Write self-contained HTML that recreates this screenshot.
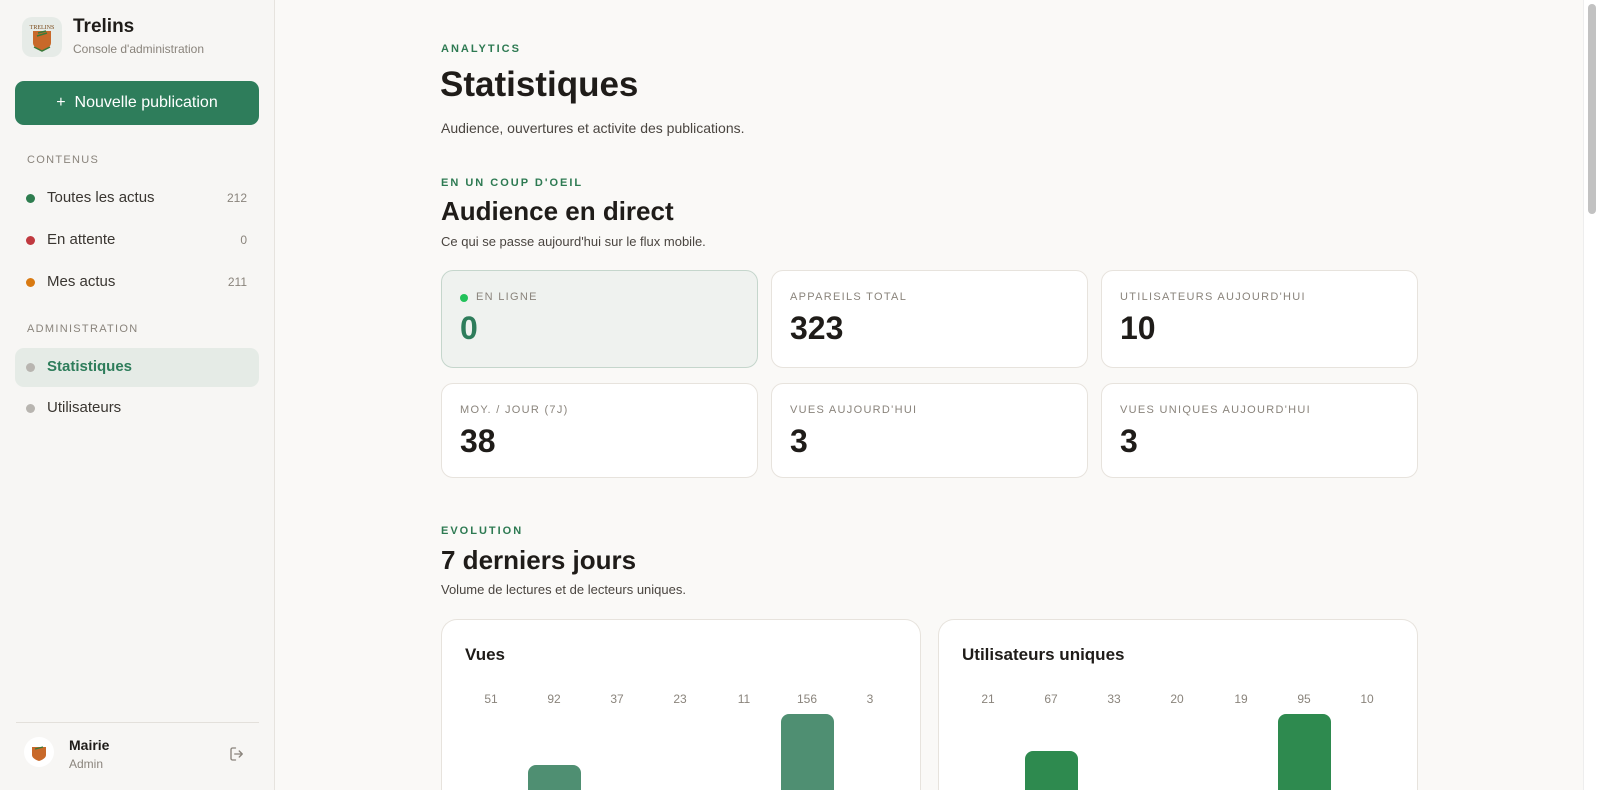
<!DOCTYPE html>
<html><head><meta charset="utf-8"><style>
*{margin:0;padding:0;box-sizing:border-box}
html,body{width:1600px;height:790px;overflow:hidden}
body{background:#faf9f7;font-family:"Liberation Sans",sans-serif;color:#1f1c19}
#w{position:relative;width:1600px;height:790px;overflow:hidden}
.a{position:absolute;white-space:nowrap}
.side{position:absolute;left:0;top:0;width:275px;height:790px;background:#f7f6f4;border-right:1px solid #e6e3de}
.lab{font-size:11px;letter-spacing:1.3px;color:#8a847c}
.dot{position:absolute;width:9px;height:9px;border-radius:50%}
.it{font-size:15px;color:#3a3631}
.cnt{font-size:12px;color:#8a847c}
.card{position:absolute;width:317px;background:#fff;border:1px solid #e7e3dd;border-radius:12px}
.card .l{position:absolute;left:18px;top:20px;font-size:11px;letter-spacing:1.3px;color:#8a847c}
.card .v{position:absolute;left:18px;top:39px;font-size:32px;font-weight:bold;color:#1f1c19}
.kick{font-size:11px;font-weight:bold;letter-spacing:2px;color:#2d7a52}
.h2{font-size:26px;font-weight:bold}
.desc{font-size:13px;color:#4a4540}
.cc{position:absolute;top:619px;width:480px;height:171px;background:#fff;border:1px solid #e7e3dd;border-bottom:none;border-radius:16px 16px 0 0;overflow:hidden}
.num{position:absolute;top:72px;width:40px;margin-left:-20px;text-align:center;font-size:12px;color:#8a847c}
.bar{position:absolute;width:53px;margin-left:-26px;height:200px;border-radius:8px}
</style></head><body><div id="w">
<div class="side">
<div class="a" style="left:22px;top:17px;width:40px;height:40px;border-radius:10px;background:#e6ebe7">
<svg width="40" height="40" viewBox="0 0 40 40"><text x="20" y="12" font-size="6" text-anchor="middle" fill="#7a4a1a" font-family="Liberation Serif">TRELINS</text><path d="M11 14h18v12c0 4-5 6-9 8-4-2-9-4-9-8z" fill="#c8692a"/><path d="M16 16l8-2M15 19l10-3" stroke="#3a7a3a" stroke-width="1.5"/><path d="M12 30l8 4 8-4" stroke="#3a7a3a" stroke-width="1.5" fill="none"/></svg></div>
<div class="a" style="left:73px;top:16px;font-size:19px;font-weight:bold">Trelins</div>
<div class="a" style="left:73px;top:42px;font-size:12px;color:#8a847c">Console d'administration</div>
<div class="a" style="left:15px;top:81px;width:244px;height:44px;background:#2e7d5b;border-radius:9px;color:#fff;font-size:16px;text-align:center;line-height:44px">+&nbsp;&nbsp;Nouvelle publication</div>
<div class="a lab" style="left:27px;top:154px">CONTENUS</div>
<div class="dot" style="left:26px;top:194px;background:#2e7d4f"></div><div class="a it" style="left:47px;top:189px">Toutes les actus</div><div class="a cnt" style="right:27px;top:191px">212</div>
<div class="dot" style="left:26px;top:236px;background:#c0393f"></div><div class="a it" style="left:47px;top:231px">En attente</div><div class="a cnt" style="right:27px;top:233px">0</div>
<div class="dot" style="left:26px;top:278px;background:#d97a12"></div><div class="a it" style="left:47px;top:273px">Mes actus</div><div class="a cnt" style="right:27px;top:275px">211</div>
<div class="a lab" style="left:27px;top:323px">ADMINISTRATION</div>
<div class="a" style="left:15px;top:348px;width:244px;height:39px;background:#e5ebe6;border-radius:9px"></div>
<div class="dot" style="left:26px;top:363px;background:#b8b5b0"></div><div class="a it" style="left:47px;top:358px;color:#2e7d5b;font-weight:bold">Statistiques</div>
<div class="dot" style="left:26px;top:404px;background:#b8b5b0"></div><div class="a it" style="left:47px;top:399px">Utilisateurs</div>
<div class="a" style="left:16px;top:722px;width:243px;height:1px;background:#e3e0db"></div>
<div class="a" style="left:24px;top:737px;width:30px;height:30px;border-radius:50%;background:#fff"><svg width="30" height="30" viewBox="0 0 30 30"><path d="M8 10h14v8c0 3-4 5-7 6-3-1-7-3-7-6z" fill="#c8692a"/><path d="M11 12l8-2" stroke="#3a7a3a" stroke-width="1.3"/></svg></div>
<div class="a" style="left:69px;top:737px;font-size:14px;font-weight:bold">Mairie</div>
<div class="a" style="left:69px;top:757px;font-size:12px;color:#8a847c">Admin</div>
<svg class="a" style="left:228px;top:745px" width="18" height="18" viewBox="0 0 24 24" fill="none" stroke="#8a847c" stroke-width="1.8" stroke-linecap="round" stroke-linejoin="round"><path d="M10 4H6a2 2 0 0 0-2 2v12a2 2 0 0 0 2 2h4"/><path d="M15 8l4 4-4 4M19 12H9"/></svg>
</div>

<div class="a kick" style="left:441px;top:43px">ANALYTICS</div>
<div class="a" style="left:440px;top:65px;font-size:35px;font-weight:bold">Statistiques</div>
<div class="a" style="left:441px;top:120px;font-size:14px;color:#4a4540">Audience, ouvertures et activite des publications.</div>
<div class="a kick" style="left:441px;top:177px">EN UN COUP D'OEIL</div>
<div class="a h2" style="left:441px;top:196px">Audience en direct</div>
<div class="a desc" style="left:441px;top:234px">Ce qui se passe aujourd'hui sur le flux mobile.</div>

<div class="card" style="left:441px;top:270px;height:98px;background:#eff2ef;border-color:#c5d6cc"><div class="dot" style="left:18px;top:23px;width:8px;height:8px;background:#22c25a"></div><div class="l" style="left:34px">EN LIGNE</div><div class="v" style="color:#2e7d5b">0</div></div>
<div class="card" style="left:771px;top:270px;height:98px"><div class="l">APPAREILS TOTAL</div><div class="v">323</div></div>
<div class="card" style="left:1101px;top:270px;height:98px"><div class="l">UTILISATEURS AUJOURD'HUI</div><div class="v">10</div></div>
<div class="card" style="left:441px;top:383px;height:95px"><div class="l">MOY. / JOUR (7J)</div><div class="v">38</div></div>
<div class="card" style="left:771px;top:383px;height:95px"><div class="l">VUES AUJOURD'HUI</div><div class="v">3</div></div>
<div class="card" style="left:1101px;top:383px;height:95px"><div class="l">VUES UNIQUES AUJOURD'HUI</div><div class="v">3</div></div>

<div class="a kick" style="left:441px;top:525px">EVOLUTION</div>
<div class="a h2" style="left:441px;top:545px">7 derniers jours</div>
<div class="a desc" style="left:441px;top:582px">Volume de lectures et de lecteurs uniques.</div>

<div class="cc" style="left:441px">
<div class="a" style="left:23px;top:25px;font-size:17px;font-weight:bold">Vues</div>
<div class="num" style="left:49px">51</div><div class="num" style="left:112px">92</div><div class="num" style="left:175px">37</div><div class="num" style="left:238px">23</div><div class="num" style="left:302px">11</div><div class="num" style="left:365px">156</div><div class="num" style="left:428px">3</div>
<div class="bar" style="left:112px;top:145px;height:30px;border-radius:8px 8px 0 0;background:#4f8f72"></div>
<div class="bar" style="left:365px;top:94px;height:80px;border-radius:8px 8px 0 0;background:#4f8f72"></div>
</div>
<div class="cc" style="left:938px">
<div class="a" style="left:23px;top:25px;font-size:17px;font-weight:bold">Utilisateurs uniques</div>
<div class="num" style="left:49px">21</div><div class="num" style="left:112px">67</div><div class="num" style="left:175px">33</div><div class="num" style="left:238px">20</div><div class="num" style="left:302px">19</div><div class="num" style="left:365px">95</div><div class="num" style="left:428px">10</div>
<div class="bar" style="left:112px;top:131px;height:45px;border-radius:8px 8px 0 0;background:#2e8a4f"></div>
<div class="bar" style="left:365px;top:94px;height:80px;border-radius:8px 8px 0 0;background:#2e8a4f"></div>
</div>

<div class="a" style="left:1583px;top:0;width:17px;height:790px;background:#fff;border-left:1px solid #eee"></div>
<div class="a" style="left:1588px;top:4px;width:8px;height:210px;border-radius:4px;background:#c2c2c2"></div>
</div></body></html>
